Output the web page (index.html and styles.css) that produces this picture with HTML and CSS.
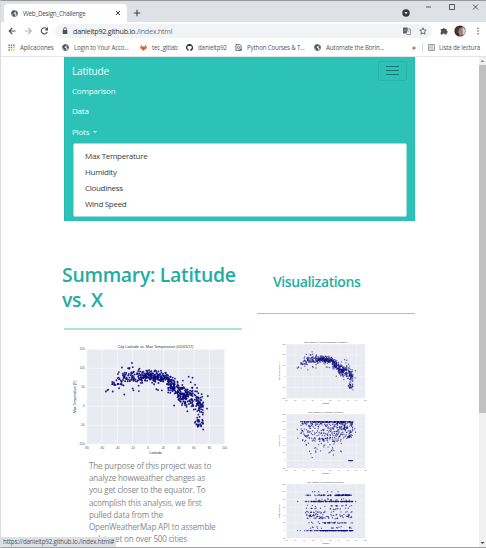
FILE: index.html
```html
<!DOCTYPE html>
<html lang="es">
<head>
<meta charset="utf-8">
<title>Web_Design_Challenge</title>
<link rel="stylesheet" href="styles.css">
</head>
<body>
<svg class="defs" aria-hidden="true">
  <symbol id="globe" viewBox="0 0 16 16"><circle cx="8" cy="8" r="7" fill="#fff" stroke="#50545a" stroke-width="1.8"/><path d="M2 4 6 1l5 1-2 3-3 1v2l4 2-1 4-3 1-2-4-3-3zM12 3l3 4-1 4-3-2-1-3z" fill="#50545a"/></symbol>
</svg>
<div class="window">
  <header class="tabs">
    <div class="tab"><svg class="ico"><use href="#globe"/></svg><span class="tab-title">Web_Design_Challenge</span>
      <svg class="close" viewBox="0 0 6 6"><path d="M1 1l4 4M5 1L1 5" stroke="#333" stroke-width="1"/></svg></div>
    <svg class="plus" viewBox="0 0 8 8"><path d="M4 .8v6.4M.8 4h6.4" stroke="#444" stroke-width="1.1"/></svg>
    <svg class="status" viewBox="0 0 8 8"><circle cx="4" cy="4" r="3.7" fill="#34373b"/><path d="M2.3 3.1h3.4L4 5.4z" fill="#dee1e6"/></svg>
    <svg class="controls" viewBox="0 0 54 8"><g fill="none" stroke="#333" stroke-width=".8"><path d="M1 4h5M24.500 1.500h5v5h-5zM48 1.500l5 5M53 1.500l-5 5"/></g></svg>
  </header>
  <div class="toolbar">
    <svg class="nav-icons" viewBox="0 0 42 10"><g fill="none" stroke-width="1.1"><path d="M7.500 5H1.200M4.200 2 1.200 5l3 3" stroke="#4d5156"/><path d="M17 5h6.300M20.300 2l3 3-3 3" stroke="#b4b7ba"/><path d="M39 3.200a3.100 3.100 0 1 0 .3 2.600" stroke="#4d5156"/></g><path d="M40 1v3.500h-3.500z" fill="#4d5156"/></svg>
    <div class="address">
      <svg class="lock" viewBox="0 0 6 8"><path d="M.7 3h4.600v4H.7z" fill="#4d5156"/><path d="M1.600 3V2a1.400 1.400 0 0 1 2.800 0v1" fill="none" stroke="#4d5156" stroke-width=".8"/></svg>
      <span class="url">danieltp92.github.io<i>./index.html</i></span>
      <svg class="translate" viewBox="0 0 8 8"><path d="M0 .5h4.500l1.500 6H0z" fill="#63676b"/><path d="M5 2h2.600v5.500H3.500" fill="#fff" stroke="#63676b" stroke-width=".7"/><path d="M1.200 3.300h2M4.700 4h2M5.700 3.500v2" stroke="#aaa" stroke-width=".7"/></svg>
      <svg class="star" viewBox="0 0 8 8"><path d="M4 .8l.9 2.200 2.400.2-1.800 1.600.6 2.400L4 6l-2.100 1.200.6-2.400L.7 3.200 3.100 3z" fill="none" stroke="#4d5156" stroke-width=".8"/></svg>
    </div>
    <svg class="puzzle" viewBox="0 0 8 8"><path d="M.7 2h2a1 1 0 0 1 2.100 0h1.800v1.800a1.100 1.100 0 0 1 0 2.200v1.500H4.700a1 1 0 0 0-2 0h-2V5.300a1 1 0 0 0 0-1.700z" fill="#4d5156"/></svg>
    <svg class="avatar" viewBox="0 0 12 12"><circle cx="6" cy="6" r="5.600" fill="#332b2a"/><path d="M5 3l3-1 2 3-1 5-3 1-2-4z" fill="#a58075"/><path d="M8.500 1.200 11.500 5 10.500 9 9 10z" fill="#d9d2ce"/><path d="M1 4l3-3 4 1-3 2-1 4-2 1z" fill="#463630"/></svg>
    <svg class="more" viewBox="0 0 2 8"><g fill="#4d5156"><circle cx="1" cy="1.300" r=".75"/><circle cx="1" cy="4" r=".75"/><circle cx="1" cy="6.700" r=".75"/></g></svg>
  </div>
  <nav class="bookmarks">
    <span class="bm b1"><svg class="ico" viewBox="0 0 8 8"><path d="M.5.500h1.700v1.700H.5zM3.200.500h1.700v1.700H3.200zM5.900.500h1.700v1.700H5.900z" fill="#e94b3c"/><path d="M.5 3.200h1.700v1.700H.5z" fill="#35a853"/><path d="M3.200 3.200h1.700v1.700H3.200z" fill="#4285f4"/><path d="M5.900 3.200h1.700v1.700H5.900zM3.200 5.900h1.700v1.700H3.200zM5.900 5.900h1.700v1.700H5.900z" fill="#f5b72c"/><path d="M.5 5.900h1.700v1.700H.5z" fill="#35a853"/></svg>Aplicaciones</span>
    <span class="bm b2"><svg class="ico"><use href="#globe"/></svg>Login to Your Acco...</span>
    <span class="bm b3"><svg class="ico" viewBox="0 0 8 8"><path d="M1.500.500 2.700 3h2.600L6.500.500 8 4.500 4 7.700 0 4.500z" fill="#f46a25"/><path d="M2.700 3h2.600L4 7.700z" fill="#df4328"/></svg>tec_gitlab</span>
    <span class="bm b4"><svg class="ico" viewBox="0 0 16 16"><path fill="#24282d" d="M8 0C3.580 0 0 3.580 0 8c0 3.540 2.290 6.530 5.470 7.590.4.070.55-.17.55-.38v-1.500c-2.010.37-2.530-.5-2.700-.95-.36-.92-.85-1.250-1.100-1.400 1-.3 1.600.7 1.900 1.200.7 1.100 1.700.8 2.100.6.070-.5.280-.87.510-1.070-1.780-.2-3.640-.89-3.640-3.950 0-.87.310-1.590.82-2.150-.1-.2-.36-1 .08-2.120 0 0 .67-.21 2.200.82a7.600 7.600 0 0 1 4 0c1.530-1.040 2.200-.82 2.200-.82.44 1.100.16 1.920.08 2.120.51.560.82 1.270.82 2.150 0 3.070-1.870 3.750-3.650 3.950.29.250.54.730.54 1.480v2.200c0 .21.150.46.550.38A8 8 0 0 0 16 8c0-4.420-3.580-8-8-8z"/></svg>danieltp92</span>
    <span class="bm b5"><svg class="ico" viewBox="0 0 8 8"><path d="M1 .6h4.500L7 2v5.400H1z" fill="#eef3f7" stroke="#42596b" stroke-width=".9"/><circle cx="4" cy="4" r="1.200" fill="none" stroke="#42596b" stroke-width=".8"/><path d="M5 6.500h3" stroke="#42596b"/></svg>Python Courses &amp; T...</span>
    <span class="bm b6"><svg class="ico"><use href="#globe"/></svg>Automate the Borin...</span>
    <span class="bm b7">»</span>
    <span class="bm b8"><svg class="ico" viewBox="0 0 8 8"><path d="M.6.600h6.800v6.800H.6z" fill="#f4f4f4" stroke="#70757a" stroke-width=".8"/><path d="M4.800.6v6.800M1.700 2.400h2M1.700 4h2M1.700 5.600h2" stroke="#70757a" stroke-width=".6"/></svg>Lista de lectura</span>
  </nav>
  <div class="view">
    <main class="page">
      <nav class="navbar">
        <div class="brand-row"><span class="brand">Latitude</span><button class="toggler" aria-label="Menu"><span></span><span></span><span></span></button></div>
        <a class="link">Comparison</a>
        <a class="link">Data</a>
        <a class="link plots">Plots</a>
        <div class="menu"><a>Max Temperature</a><a>Humidity</a><a>Cloudiness</a><a>Wind Speed</a></div>
      </nav>
      <div class="columns">
        <section class="summary">
          <h1>Summary: Latitude<br>vs. X</h1>
          <hr>
          <svg class="chart big" viewBox="0 0 180 120" data-kind="temp"></svg>
          <p>The purpose of this project was to<br>analyze howweather changes as<br>you get closer to the equator. To<br>acomplish this analysis, we first<br>pulled data from the<br>OpenWeatherMap API to assemble<br>a dataset on over 500 cities</p>
        </section>
        <section class="visuals">
          <h2>Visualizations</h2>
          <hr>
          <svg class="chart" viewBox="0 0 180 120" data-kind="temp"></svg>
          <svg class="chart" viewBox="0 0 180 120" data-kind="humidity"></svg>
          <svg class="chart" viewBox="0 0 180 120" data-kind="cloud"></svg>
        </section>
      </div>
    </main>
    <aside class="scroll"><svg viewBox="0 0 7 8"><path d="M1.500 5 3.500 3l2 2z" fill="#888"/></svg><div class="thumb"></div><svg viewBox="0 0 7 8"><path d="M1.500 3h4l-2 2z" fill="#444"/></svg></aside>
    <div class="hint">https://danieltp92.github.io./index.html#</div>
  </div>
</div>
<script src="charts.js"></script>
</body>
</html>
```
FILE: styles.css
```css
* { box-sizing: border-box; }
body { margin: 0; font-family: "Open Sans", "Noto Sans", sans-serif; background: #fff; }
svg { display: block; flex: none; }
.defs { position: absolute; width: 0; height: 0; }
.window { width: 486px; height: 548px; display: flex; flex-direction: column; overflow: hidden; border-top: 1px solid #97999d; border-bottom: 1px solid #a0a0a0; border-left: 1px solid #d9dbde; }
.tabs { height: 21px; flex: none; background: #dee1e6; display: flex; padding-left: 3px; }
.tab { width: 123px; height: 18px; margin-top: 3px; border-radius: 4px 4px 0 0; background: #fff; display: flex; align-items: center; padding: 0 6px 0 7px; font-size: 6.3px; color: #4a4d51; }
.ico { width: 7px; height: 7px; }
.tab-title { margin-left: 5px; flex: 1; white-space: nowrap; letter-spacing: -.25px; }
.close { width: 6px; height: 6px; }
.plus { width: 8px; height: 8px; margin: 8px 0 0 6px; }
.status { width: 8px; height: 8px; margin: 8px 0 0 261px; }
.controls { width: 54px; height: 8px; margin: 2px 0 0 15px; }
.toolbar { height: 18px; flex: none; display: flex; align-items: center; padding-left: 7px; }
.nav-icons { width: 42px; height: 10px; }
.address { width: 377px; height: 14px; margin-left: 5px; border-radius: 7px; background: #f1f3f4; display: flex; align-items: center; padding: 0 5px 0 7px; }
.lock { width: 6px; height: 8px; }
.url { flex: 1; margin-left: 5px; font-size: 7.2px; letter-spacing: -.25px; color: #303337; white-space: nowrap; }
.url i { font-style: normal; color: #74787c; }
.translate { width: 8px; height: 8px; }
.star { width: 8px; height: 8px; margin-left: 8px; }
.puzzle { width: 8px; height: 8px; margin-left: 8px; }
.avatar { width: 12px; height: 12px; margin-left: 6px; }
.more { width: 2px; height: 8px; margin-left: 11px; }
.bookmarks { height: 17px; flex: none; display: flex; align-items: center; padding: 0 0 2px 7px; border-bottom: 1px solid #e4e5e7; font-size: 6.2px; color: #55585c; }
.bm { display: flex; align-items: center; gap: 5px; flex: none; white-space: nowrap; letter-spacing: -.17px; }
.b1 { width: 54px; }
.b2 { width: 78px; }
.b3 { width: 46px; }
.b4 { width: 49px; }
.b5 { width: 79px; }
.b6 { width: 98px; }
.b7 { width: 10px; font-weight: 700; }
.b8 { border-left: 1px solid #d5d7d9; padding-left: 5px; gap: 4px; }
.view { flex: 1; min-height: 0; display: flex; position: relative; }
.page { flex: 1; padding-left: 63px; overflow: hidden; }
.navbar { width: 351px; height: 164px; padding: 3px 8px; background: #2cc2b7; border: solid #28b9ae; border-width: 0 1px; color: #f3fffd; font-size: 8px; }
.brand-row { height: 21px; margin-bottom: 4px; display: flex; align-items: center; justify-content: space-between; }
.brand { font-size: 10.200px; margin-left: -1px; letter-spacing: -.25px; }
.toggler { width: 29px; height: 20px; margin-right: -1px; border: 1px solid #28b4a9; border-radius: 2px; background: none; padding: 3px 7px; display: flex; flex-direction: column; justify-content: space-around; }
.toggler span { height: 1px; background: #17776f; }
.link { display: block; height: 20.300px; line-height: 12px; margin-left: -1px; letter-spacing: -.2px; }
.plots { height: 17px; }
.plots::after { content: ""; display: inline-block; margin-left: 4px; vertical-align: 2px; border: 2.500px solid transparent; border-top-color: #f3fffd; border-bottom: 0; }
.menu { width: 334px; height: 74px; border: 1px solid #a3dcd7; border-radius: 2px; background: #fff; padding: 4px 11px; color: #3c4146; }
.menu a { display: block; height: 16.200px; line-height: 16px; font-size: 8px; letter-spacing: -.3px; }
.columns { display: flex; color: #1fada3; }
.summary { width: 178px; margin-right: 15px; }
h1 { margin: 42px 0 0 -2px; height: 48px; font-size: 19.400px; line-height: 24.500px; font-weight: 600; white-space: nowrap; letter-spacing: -.28px; }
hr { border: 0; height: 1px; margin: 0; background: #85d3cf; }
.summary hr { margin-top: 17px; height: 2px; background: #b2e2df; }
.chart.big { width: 180px; height: 120px; margin: 10px 0 0 -4px; }
p { margin: 0 0 0 25px; font-size: 8.100px; line-height: 12.200px; color: #85898c; white-space: nowrap; letter-spacing: -.18px; }
.visuals { width: 158px; }
h2 { margin: 51px 0 0 16px; height: 20px; line-height: 20px; font-size: 14px; font-weight: 600; letter-spacing: -.38px; }
.visuals hr { margin-top: 21px; margin-bottom: 24px; }
.visuals .chart { width: 103px; height: 70px; margin-left: 14px; }
.scroll { width: 7px; background: #f0f0f0; display: flex; flex-direction: column; }
.scroll svg { width: 7px; height: 8px; }
.thumb { height: 348px; margin-bottom: auto; background: #c0c0c0; }
.hint { position: absolute; left: 0; bottom: 0; width: 115px; height: 10px; padding-left: 2px; border-radius: 0 2px 0 0; background: #dee1e6; color: #505459; font-size: 6.200px; line-height: 10px; white-space: nowrap; letter-spacing: -.15px; }
.chart text { font-family: "Liberation Sans", Arial, sans-serif; fill: #333; }
.chart .tick { font-size: 3.100px; fill: #555; }
.chart .axis { font-size: 3.500px; }
.chart .title { font-size: 3.800px; }
```
FILE: charts.js
```js
const NS = "http://www.w3.org/2000/svg";
const L = 26.7, T = 9.3, W = 138, H = 95;

function generator(seed) {
  return () => (seed = (seed * 16807) % 2147483647) / 2147483647;
}

function add(svg, name, attrs, text) {
  const el = document.createElementNS(NS, name);
  for (const key in attrs) el.setAttribute(key, attrs[key]);
  if (text !== undefined) el.textContent = text;
  svg.appendChild(el);
}

const curve = [[-55, 40], [-46, 57], [-38, 66], [-28, 74], [-15, 78], [0, 79], [15, 78], [24, 70], [33, 52], [42, 34], [52, 24], [62, 12], [68, 4], [73, 0]];
function mean(lat) {
  for (let i = 1; i < curve.length; i++) {
    if (lat <= curve[i][0]) {
      const [a, b] = [curve[i - 1], curve[i]];
      return a[1] + (b[1] - a[1]) * (lat - a[0]) / (b[0] - a[0]);
    }
  }
  return 0;
}

function temperature(r) {
  const pts = [[-55, 39], [-53, 42], [-52, 44], [-46, 39], [-31, 31], [-21, 114], [-34, 102], [-38, 90], [-26, 100], [-20, 103], [53, 78], [58, 75], [78, 27], [77, -6], [72, -61], [34, 2], [-20, 47], [-19, 42], [-12, 40], [11, 45], [13, 43], [18, 42], [-32, 55], [-36, 58], [8, 58]];
  for (let i = 0; i < 510; i++) {
    const lat = i < 110 ? -40 + r() * 40 : i < 255 ? r() * 30 - 3 : 26 + r() * 46;
    const spread = lat > 50 ? 36 : lat > 26 ? 26 : lat > -10 ? 15 : 23;
    pts.push([lat, mean(lat) + (r() + r() + r() - 1.5) * spread]);
  }
  for (let i = 0; i < 8; i++) pts.push([-47 + r() * 8, 53 + r() * 16]);
  for (let i = 0; i < 22; i++) pts.push([61 + r() * 11, -30 - r() * 24]);
  for (let i = 0; i < 20; i++) pts.push([45 + r() * 13, 25 + r() * 8]);
  return pts;
}

function humidity(r) {
  const pts = [[-55, 80], [-54, 58], [-21, 8], [-24, 18], [78, 73], [76, 82], [20, 22], [26, 30]];
  for (let i = 0; i < 110; i++) pts.push([i < 15 ? -48 + r() * 25 : -26 + r() * 98, 100]);
  for (let i = 0; i < 350; i++) {
    const lat = i < 135 ? -47 + r() * 62 : 12 + r() * 60;
    pts.push([lat, 99 - Math.pow(r(), 1.4) * (lat > 45 ? 43 : 50)]);
  }
  for (let i = 0; i < 35; i++) pts.push([-40 + r() * 90, 12 + r() * 45]);
  for (let i = 0; i < 10; i++) pts.push([62 + i, 0]);
  return pts;
}

function cloudiness(r) {
  const pts = [[-54, 0], [-54, 75], [-48, 0], [78, 75]];
  for (let i = 0; i < 165; i++) pts.push([i < 20 ? -40 + r() * 40 : -3 + r() * 75, 0]);
  for (let i = 0; i < 95; i++) pts.push([-38 + r() * 110, 75]);
  for (let i = 0; i < 85; i++) pts.push([i < 30 ? 32 + r() * 38 : -37 + r() * 108, 90 + r() * 2]);
  for (const y of [20, 32, 36, 40, 48, 56, 64, 80, 8])
    for (let i = 0; i < 17; i++) pts.push([-36 + r() * 106, y + r() * 4 - 2]);
  for (let i = 0; i < 30; i++) pts.push([-34 + r() * 36, 30 + r() * 20]);
  for (let i = 0; i < 25; i++) pts.push([-4 + r() * 76, 20]);
  for (const x of [-20, -15, -6, 14, 24, 38]) pts.push([x, 100]);
  return pts;
}

const kinds = {
  temp: { build: temperature, min: -100, max: 150, step: 50, title: "City Latitude vs. Max Temperature (01/05/17)", label: "Max Temperature (F)" },
  humidity: { build: humidity, min: -20, max: 120, step: 20, title: "City Latitude vs. Humidity (01/05/17)", label: "Humidity (%)" },
  cloud: { build: cloudiness, min: -20, max: 120, step: 20, title: "City Latitude vs. Cloudiness (01/05/17)", label: "Cloudiness (%)" }
};

document.querySelectorAll(".chart").forEach(svg => {
  const k = kinds[svg.dataset.kind];
  const big = svg.classList.contains("big");
  const px = v => L + (v + 80) / 180 * W;
  const py = v => T + (k.max - v) / (k.max - k.min) * H;
  add(svg, "rect", { x: L, y: T, width: W, height: H, fill: "#eaeaf2" });
  for (let v = -80; v <= 100; v += 20) {
    add(svg, "path", { d: `M${px(v)} ${T}v${H}`, stroke: "#fff", "stroke-width": .5 });
    add(svg, "text", { x: px(v), y: T + H + 4.5, "text-anchor": "middle", class: "tick" }, v);
  }
  for (let v = k.min; v <= k.max; v += k.step) {
    add(svg, "path", { d: `M${L} ${py(v)}h${W}`, stroke: "#fff", "stroke-width": .5 });
    add(svg, "text", { x: L - 2, y: py(v) + 1, "text-anchor": "end", class: "tick" }, v);
  }
  for (const [x, y] of k.build(generator(4217))) {
    add(svg, "circle", { cx: px(x), cy: py(y), r: big ? .95 : 1.2, fill: "#0b0b7c", "fill-opacity": big ? .9 : .65 });
  }
  add(svg, "text", { x: L + W / 2, y: T - 1.5, "text-anchor": "middle", class: "title" }, k.title);
  add(svg, "text", { x: L + W / 2, y: T + H + 9.3, "text-anchor": "middle", class: "axis" }, "Latitude");
  add(svg, "text", { transform: `translate(15.5 ${T + H / 2}) rotate(-90)`, "text-anchor": "middle", class: "axis" }, k.label);
});
```
